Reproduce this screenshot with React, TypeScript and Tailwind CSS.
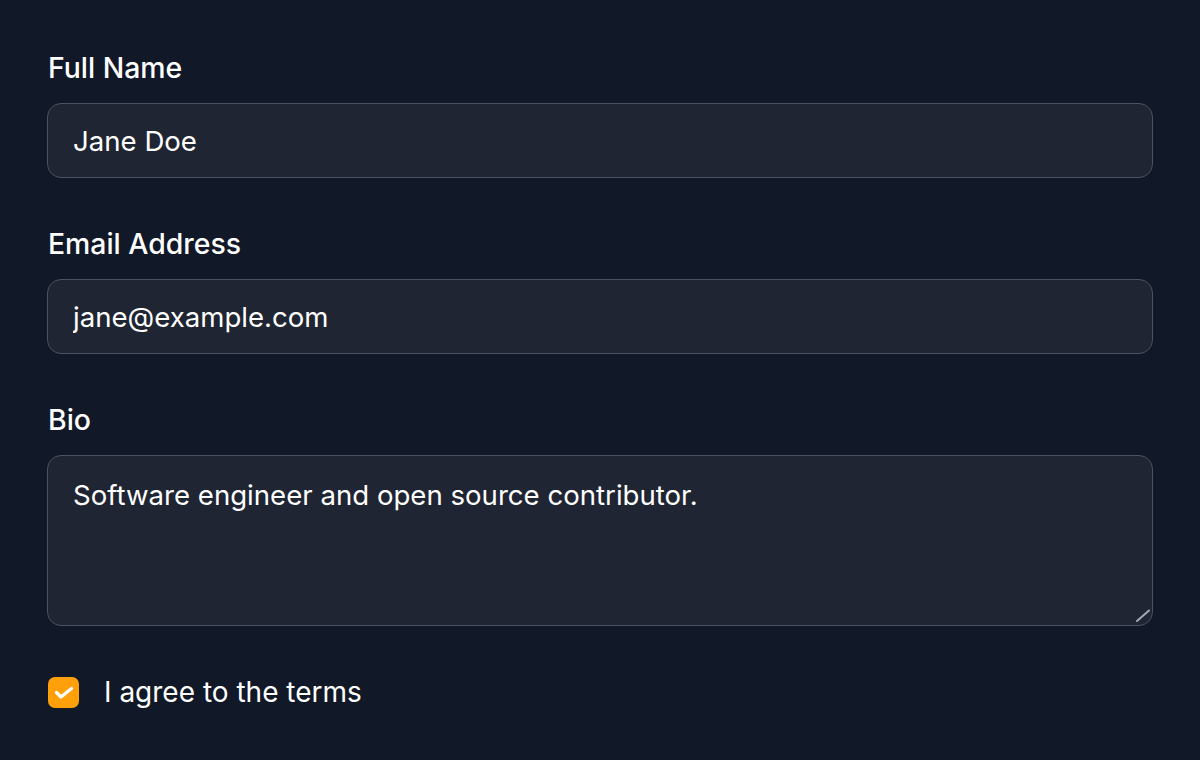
import { useState } from "react";

export default function App() {
  const [name, setName] = useState("Jane Doe");
  const [email, setEmail] = useState("jane@example.com");
  const [bio, setBio] = useState("Software engineer and open source contributor.");
  const [agree, setAgree] = useState(true);

  return (
    <div
      className="min-h-[760px] w-full bg-[#111827] px-[47px] pt-[48px] text-white"
      style={{ fontFamily: "Inter, 'Noto Sans', sans-serif" }}
    >
      <div className="flex flex-col gap-[46px]">
        {/* Full Name */}
        <div className="flex flex-col gap-[15px]">
          <label className="pl-[1px] text-[28.4px] leading-[40px] font-medium text-white">Full Name</label>
          <input
            type="text"
            value={name}
            onChange={(e) => setName(e.target.value)}
            className="h-[75px] w-full rounded-[14px] border border-[#4a5160] bg-[#1f2532] px-[25px] text-[27.6px] text-white focus:outline-none"
          />
        </div>

        {/* Email */}
        <div className="flex flex-col gap-[15px]">
          <label className="pl-[1px] text-[28.4px] leading-[40px] font-medium text-white">Email Address</label>
          <input
            type="email"
            value={email}
            onChange={(e) => setEmail(e.target.value)}
            className="h-[75px] w-full rounded-[14px] border border-[#4a5160] bg-[#1f2532] px-[25px] text-[27.6px] text-white focus:outline-none"
          />
        </div>

        {/* Bio */}
        <div className="flex flex-col gap-[15px]">
          <label className="pl-[1px] text-[28.4px] leading-[40px] font-medium text-white">Bio</label>
          <div className="relative">
            <textarea
              value={bio}
              onChange={(e) => setBio(e.target.value)}
              className="block h-[171px] w-full resize-none rounded-[14px] border border-[#4a5160] bg-[#1f2532] px-[25px] py-[19px] text-[27.6px] leading-[40px] text-white focus:outline-none"
            />
            {/* resize grip */}
            <svg
              className="pointer-events-none absolute right-[3px] bottom-[3px]"
              width="16"
              height="16"
              viewBox="0 0 16 16"
            >
              <line x1="3" y1="14" x2="15" y2="3.5" stroke="#a3a7b0" strokeWidth="2" strokeLinecap="round" />
            </svg>
          </div>
        </div>
      </div>

      {/* Terms */}
      <label className="mt-[45px] flex cursor-pointer items-center gap-[25px] pl-[1px]">
        <button
          type="button"
          onClick={() => setAgree(!agree)}
          className={`flex h-[31px] w-[31px] items-center justify-center rounded-[7px] ${
            agree ? "bg-[#ff9f0a]" : "border border-[#4a5160] bg-[#1f2532]"
          }`}
        >
          {agree && (
            <svg width="31" height="31" viewBox="0 0 31 31" fill="none" stroke="white" strokeWidth="3.2" strokeLinecap="round" strokeLinejoin="round">
              <path d="M8.5 15.5L13 20l10.5-8.5" />
            </svg>
          )}
        </button>
        <span className="text-[28px] leading-[42px] text-white">I agree to the terms</span>
      </label>
    </div>
  );
}
